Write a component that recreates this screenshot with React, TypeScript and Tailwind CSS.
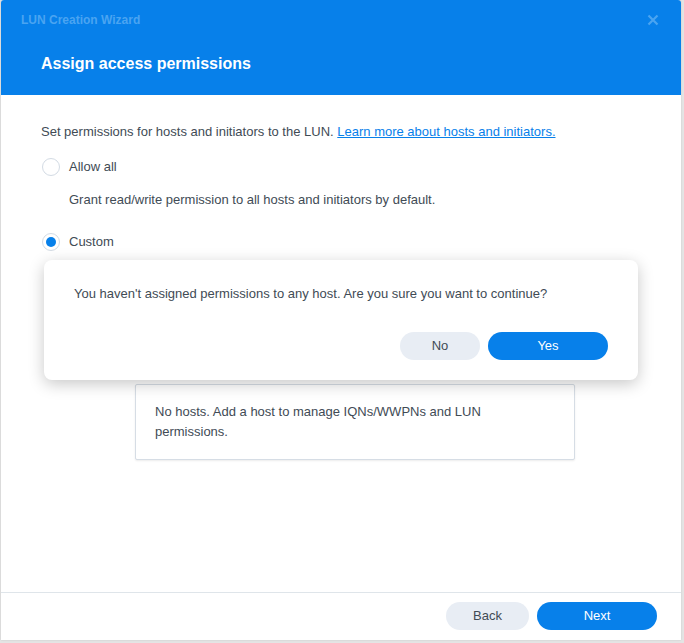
import React from 'react';

const font = { fontFamily: '"Liberation Sans", Arial, sans-serif' };

function Radio({ checked }: { checked?: boolean }) {
  return (
    <span className="flex h-[18px] w-[18px] shrink-0 items-center justify-center rounded-full border border-[#d3dbe4] bg-white">
      {checked && <span className="h-[10px] w-[10px] rounded-full bg-[#0780ea]" />}
    </span>
  );
}

function Pill({
  children,
  primary,
  className,
}: {
  children: React.ReactNode;
  primary?: boolean;
  className?: string;
}) {
  return (
    <button
      className={`h-[28px] rounded-full text-[13px] ${
        primary ? 'bg-[#0780ea] text-white' : 'bg-[#e8edf4] text-[#414b55]'
      } ${className ?? ''}`}
    >
      {children}
    </button>
  );
}

export default function App() {
  return (
    <div className="h-[643px] w-[684px] bg-[#e4e4e4] pl-px" style={font}>
      <div className="relative flex h-[640px] w-[680px] flex-col overflow-hidden rounded-t-[3px] bg-white shadow-[0_0_2px_rgba(0,0,0,0.15)]">
        {/* header */}
        <div className="h-[95px] shrink-0 bg-[#0780ea]">
          <div className="flex h-[40px] items-center justify-between pl-[20px] pr-[22px]">
            <span className="text-[12px] font-bold text-[#4aa4f1]">LUN Creation Wizard</span>
            <svg width="12" height="12" viewBox="0 0 12 12" className="text-[#4aa4f1]">
              <path d="M1.5 1.5 L10.5 10.5 M10.5 1.5 L1.5 10.5" stroke="currentColor" strokeWidth="2.2" />
            </svg>
          </div>
          <h1 className="mt-[14px] pl-[40px] text-[16px] leading-[20px] font-bold text-white">
            Assign access permissions
          </h1>
        </div>

        {/* body */}
        <div className="flex-1 px-[40px] pt-[27px] text-[13px] leading-[20px] text-[#414b55]">
          <p>
            Set permissions for hosts and initiators to the LUN.{' '}
            <a className="text-[#0780ea] underline" href="#">
              Learn more about hosts and initiators.
            </a>
          </p>
          <label className="mt-[15px] flex items-center gap-[9px] pl-px">
            <Radio />
            <span>Allow all</span>
          </label>
          <p className="mt-[13px] pl-[28px]">
            Grant read/write permission to all hosts and initiators by default.
          </p>
          <label className="mt-[22px] flex items-center gap-[9px] pl-px">
            <Radio checked />
            <span>Custom</span>
          </label>
          <div className="mt-[132px] ml-[94px] w-[440px] rounded-[2px] border border-[#d6dde5] bg-white px-[19px] pt-[17px] pb-[17px] shadow-[0_1px_2px_rgba(0,0,0,0.08)]">
            No hosts. Add a host to manage IQNs/WWPNs and LUN permissions.
          </div>
        </div>

        {/* footer */}
        <div className="flex h-[48px] shrink-0 justify-end gap-[8px] border-t border-[#dfe5ea] pt-[9px] pr-[24px]">
          <Pill className="w-[83px]">Back</Pill>
          <Pill primary className="w-[120px]">
            Next
          </Pill>
        </div>

        {/* confirm dialog */}
        <div className="absolute top-[260px] left-[43px] h-[120px] w-[594px] rounded-[8px] bg-white px-[30px] pt-[24px] text-[13px] leading-[20px] text-[#414b55] shadow-[0_4px_16px_rgba(0,0,0,0.22)]">
          <p>You haven't assigned permissions to any host. Are you sure you want to continue?</p>
          <div className="mt-[28px] flex justify-end gap-[8px]">
            <Pill className="w-[80px]">No</Pill>
            <Pill primary className="w-[120px]">
              Yes
            </Pill>
          </div>
        </div>
      </div>
    </div>
  );
}
